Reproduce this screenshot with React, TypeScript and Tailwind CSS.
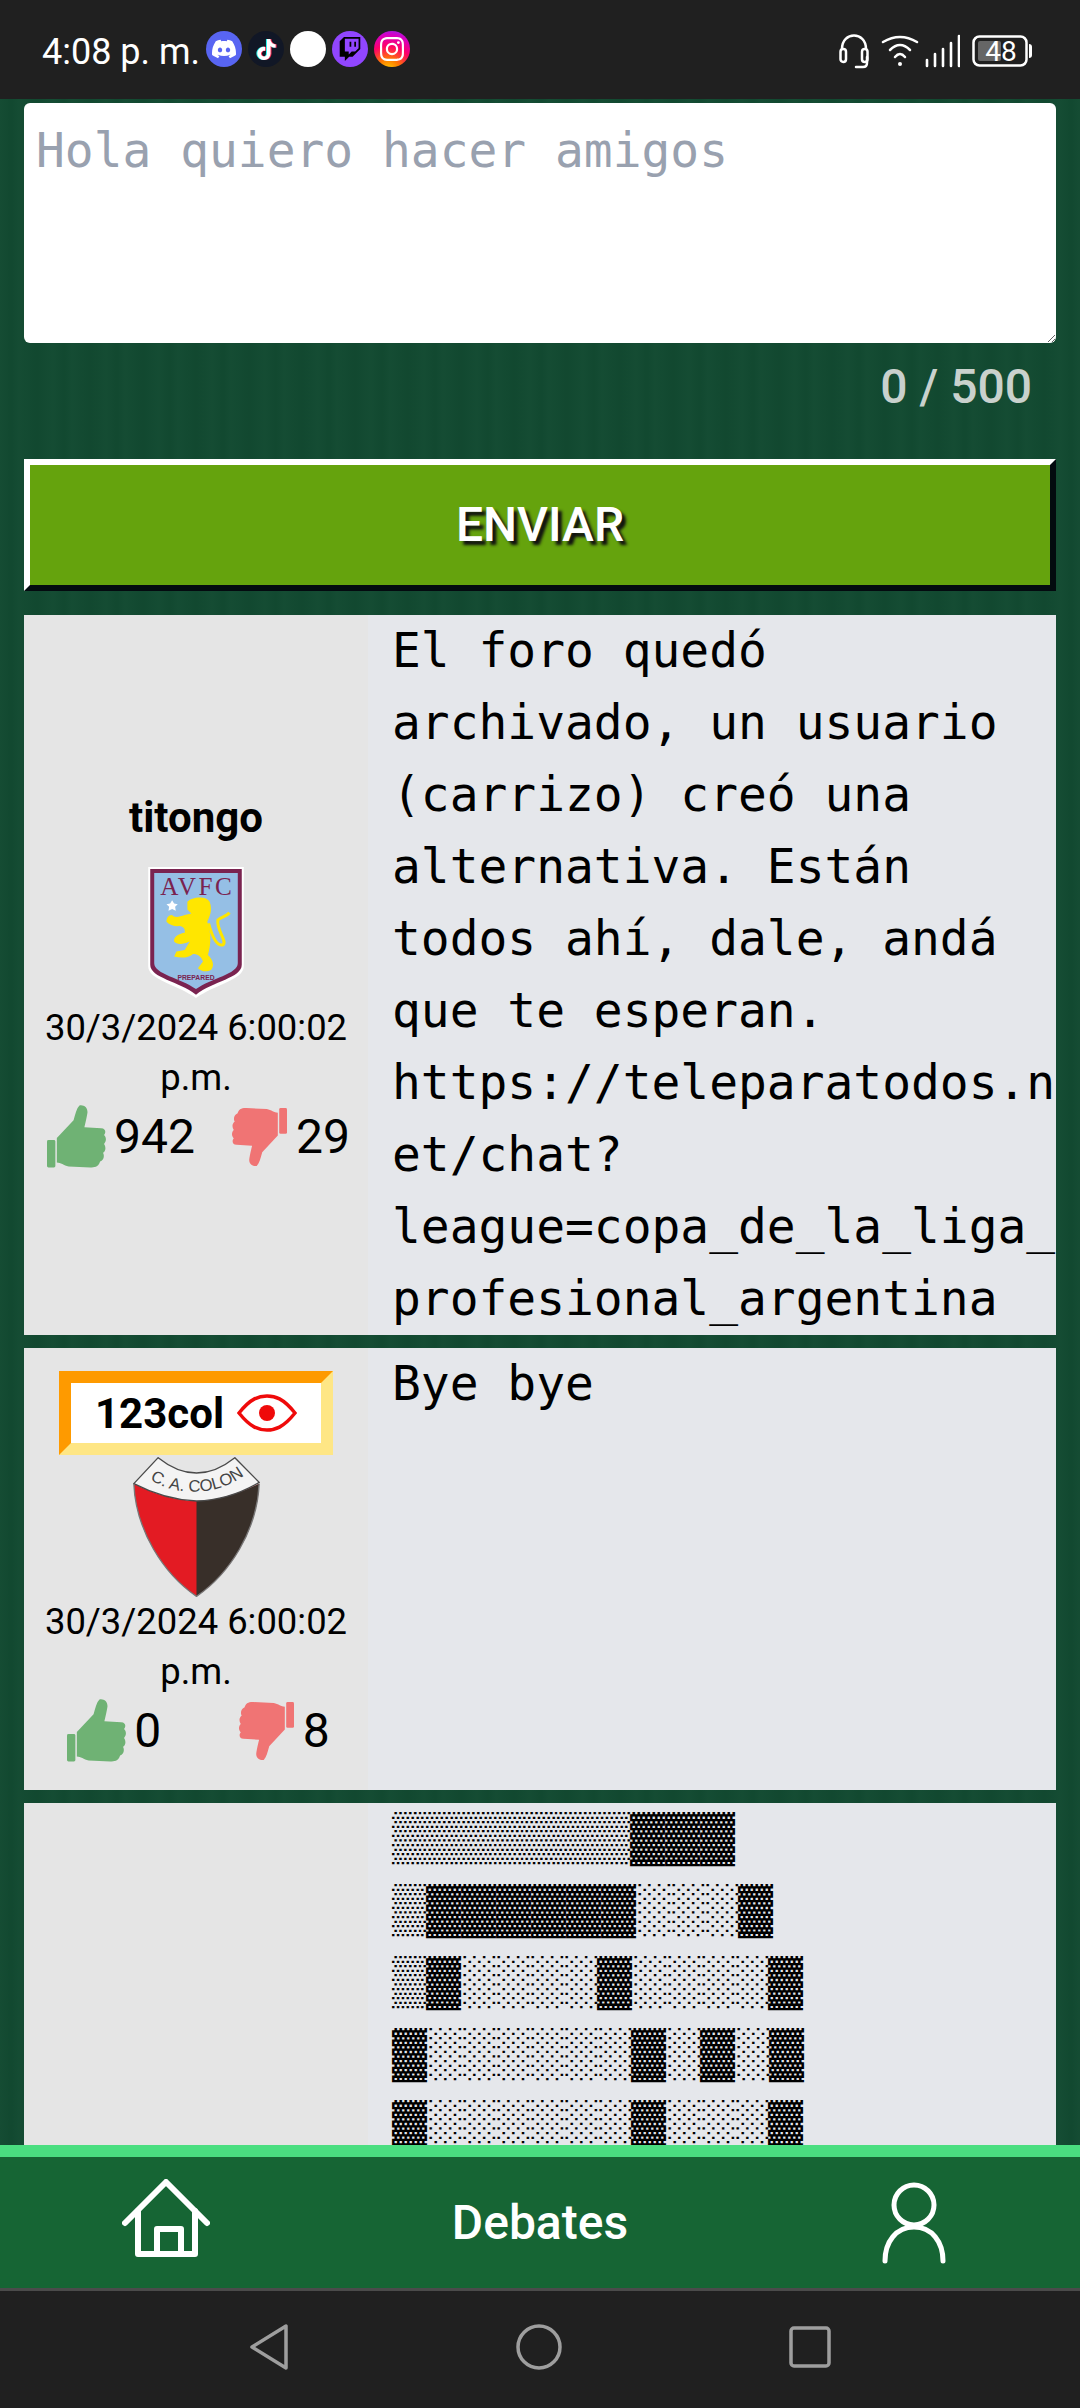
import React from "react";
import { SiDiscord, SiTiktok, SiTwitch, SiInstagram } from "react-icons/si";

const ThumbPath = ({ color }: { color: string }) => (
  <>
    <rect x="0" y="35" width="8.5" height="28" rx="1.5" fill={color} />
    <path
      fill={color}
      d="M10 33 L27 15 C29 8 30 3 33 0 C38 -1 42 3 41 8 C40 14 39 18 38 22 L55 23 C60 23 60 28 58 30 C61 33 60 37 58 39 C60 42 60 46 57 48 C59 52 57 56 54 57 C52 63 48 63 44 63 L22 62 C17 61 14 58 10 58 Z"
    />
  </>
);

const ThumbUp = () => (
  <svg viewBox="0 0 61 63" className="w-[60px] h-[63px] shrink-0">
    <ThumbPath color="#6fb274" />
  </svg>
);

const ThumbDown = () => (
  <svg viewBox="0 0 61 63" className="w-[56px] h-[58px] shrink-0 rotate-180">
    <ThumbPath color="#f07474" />
  </svg>
);

const Votes = ({ up, down }: { up: string; down: string }) => (
  <div className="mt-[2px] flex w-full items-center justify-around font-['Roboto',sans-serif] text-[48px] leading-[63px] text-black">
    <div className="ml-[5px] flex items-center gap-[7px]">
      <ThumbUp />
      <span>{up}</span>
    </div>
    <div className="flex items-center gap-[9px]">
      <ThumbDown />
      <span>{down}</span>
    </div>
  </div>
);

const DateText = () => (
  <p className="w-[320px] text-center font-['Roboto',sans-serif] text-[36.4px] leading-[50px] text-black">30/3/2024 6:00:02 p.m.</p>
);

const AvfcCrest = () => (
  <svg viewBox="0 0 288 395" className="h-[131px] w-[96px]">
    <path d="M0 0H288V300C288 340 200 355 144 395C88 355 0 340 0 300Z" fill="#ffffff" />
    <path d="M6 6H282V295C282 335 195 345 144 385C93 345 6 335 6 295Z" fill="#7a2350" />
    <path d="M18 18H270V290C270 323 190 335 144 368C98 335 18 323 18 290Z" fill="#95bfe5" />
    <text x="144" y="84" textAnchor="middle" fontFamily="'Liberation Serif',serif" fontSize="76" fill="#7a2350" textLength="216">AVFC</text>
    <path d="M72 100l6 10 11 2-8 8 2 12-11-5-11 5 2-12-8-8 11-2Z" fill="#ffffff" />
    <path
      fill="#ffe600"
      d="M118 105C130 90 175 85 185 105C195 130 185 150 178 165C190 200 190 230 180 265C195 280 200 295 190 310C175 318 160 315 150 305L165 285C160 270 150 262 135 262C120 275 100 275 78 270L85 255L110 250L125 225C105 235 85 235 78 225C75 210 95 200 110 198C112 185 105 180 95 178C80 180 65 175 55 165C55 155 60 145 72 145C80 155 95 150 110 145L130 140L118 128Z"
    />
    <path d="M182 170C190 200 205 240 225 235C240 225 205 190 210 160C220 150 235 150 245 138" fill="none" stroke="#ffe600" strokeWidth="9" />
    <text x="144" y="342" textAnchor="middle" fontFamily="'Liberation Sans',sans-serif" fontWeight="700" fontSize="22" fill="#7a2350" textLength="112" lengthAdjust="spacingAndGlyphs">PREPARED</text>
  </svg>
);

const ColonCrest = () => (
  <svg viewBox="0 0 380 420" className="h-[140px] w-[127px]">
    <path d="M2 80C8 220 90 350 190 418C290 350 372 220 378 80C320 110 250 130 190 132C130 130 60 110 2 80Z" fill="#e31b23" />
    <path d="M190 132C250 130 320 110 378 80C372 220 290 350 190 418Z" fill="#382f29" />
    <path d="M2 80L75 2C110 30 150 48 190 48C230 48 270 30 305 2L378 76C320 110 250 130 190 132C130 130 60 110 2 80Z" fill="#f4f4f4" stroke="#4a4a4a" strokeWidth="4" />
    <path d="M2 80C8 220 90 350 190 418C290 350 372 220 378 80" fill="none" stroke="#777777" strokeWidth="4" />
    <path id="colon-arc" d="M36 58C120 122 260 122 346 44" fill="none" />
    <text fontFamily="'Liberation Sans',sans-serif" fontSize="50" fill="#444444">
      <textPath href="#colon-arc" startOffset="50%" textAnchor="middle">C. A. COLON</textPath>
    </text>
  </svg>
);

const Eye = () => (
  <svg viewBox="0 0 60 38" className="h-[38px] w-[60px]">
    <path d="M2 19C14 4 22 2 30 2C38 2 46 4 58 19C46 34 38 36 30 36C22 36 14 34 2 19Z" fill="none" stroke="#ef0a0a" strokeWidth="3.5" />
    <circle cx="30" cy="19" r="8" fill="#ef0a0a" />
  </svg>
);

const shadeRows = [
  "▒▒▒▒▒▒▒▓▓▓",
  "▒▓▓▓▓▓▓░░░▓",
  "▒▓░░░░▓░░░░▓",
  "▓░░░░░░▓░▓░▓",
  "▓░░░░░░▓░░░▓",
];

export default function App() {
  return (
    <div className="flex h-[2408px] w-[1080px] flex-col overflow-hidden bg-[#202020]">
      {/* status bar */}
      <div className="flex h-[99px] shrink-0 items-center bg-[#202020] pb-[1px] pl-[42px] pr-[48px]">
        <span className="mt-[5px] font-['Roboto',sans-serif] text-[36px] leading-none text-white">4:08 p. m.</span>
        <div className="ml-[6px] flex items-center gap-[6px]">
          <span className="flex h-[36px] w-[36px] items-center justify-center rounded-full bg-[#5865f2]"><SiDiscord className="h-[24px] w-[24px] text-white" /></span>
          <span className="relative flex h-[36px] w-[36px] items-center justify-center rounded-full bg-[#111726]">
            <SiTiktok className="absolute left-[7px] top-[8px] h-[21px] w-[21px] text-[#25f4ee]" />
            <SiTiktok className="absolute left-[9px] top-[8px] h-[21px] w-[21px] text-[#fe2c55]" />
            <SiTiktok className="absolute left-[8px] top-[8px] h-[21px] w-[21px] text-white" />
          </span>
          <span className="h-[36px] w-[36px] rounded-full bg-white" />
          <span className="flex h-[36px] w-[36px] items-center justify-center rounded-full bg-[#9146ff]"><SiTwitch className="h-[24px] w-[24px] text-black" /></span>
          <span className="flex h-[36px] w-[36px] items-center justify-center rounded-full bg-[radial-gradient(circle_at_40%_110%,#ffd600_0%,#ff7a00_25%,#ff0069_55%,#d300c5_80%,#7638fa_100%)]"><SiInstagram className="h-[24px] w-[24px] text-white" /></span>
        </div>
        <div className="ml-auto mt-[3px] flex items-center">
          <svg viewBox="0 0 32 36" className="h-[36px] w-[32px]" fill="none" stroke="#ffffff" strokeWidth="2.5" strokeLinecap="round">
            <path d="M4 16C4 -2 28 -2 28 16" />
            <rect x="2.5" y="16" width="5.5" height="13" rx="2.7" />
            <rect x="24" y="16" width="5.5" height="13" rx="2.7" />
            <path d="M29 24V30Q29 34 25 34H18" />
          </svg>
          <svg viewBox="0 0 40 34" className="ml-[10px] h-[34px] w-[40px]" fill="none" stroke="#ffffff" strokeWidth="2.5" strokeLinecap="round">
            <path d="M3 8Q20 -2 37 8" />
            <path d="M10 16Q20 6 30 16" />
            <path d="M15 23Q20 17 25 23" />
            <circle cx="20" cy="30" r="2" fill="#ffffff" stroke="none" />
          </svg>
          <svg viewBox="0 0 36 34" className="ml-[4px] h-[34px] w-[36px]" stroke="#ffffff" strokeWidth="2.6" strokeLinecap="round">
            <path d="M3 32V26M11 32V20M19 32V15M27 32V9M35 32V2" />
          </svg>
          <svg viewBox="0 0 60 32" className="ml-[12px] h-[32px] w-[60px]">
            <rect x="1.5" y="1.5" width="53" height="29" rx="6" fill="none" stroke="#ffffff" strokeWidth="2.5" />
            <rect x="6" y="6" width="23" height="20" rx="2" fill="#666666" />
            <path d="M57 9C59 9 60 10 60 12V20C60 22 59 23 57 23Z" fill="#ffffff" />
            <text x="29" y="26" textAnchor="middle" fontFamily="'Roboto',sans-serif" fontSize="28" fill="#ffffff">48</text>
          </svg>
        </div>
      </div>

      {/* scrolling page */}
      <main className="min-h-0 flex-1 overflow-hidden bg-[#124a31] bg-[repeating-linear-gradient(90deg,rgba(255,255,255,0.012)_0px,rgba(0,0,0,0.02)_11px,rgba(255,255,255,0.012)_19px,rgba(0,0,0,0.025)_37px,rgba(255,255,255,0.01)_53px)] px-[24px] pt-[4px]">
        <textarea
          readOnly
          placeholder="Hola quiero hacer amigos"
          className="block h-[240px] w-[1032px] rounded-[6px] bg-white px-[12px] py-[12px] font-['DejaVu_Sans_Mono',monospace] text-[47.9px] leading-[72px] text-black outline-none placeholder:text-gray-400"
        />
        <div className="flex h-[116px] items-start justify-end pr-[24px] pt-[8px] font-['Roboto',sans-serif] text-[48px] font-medium leading-[72px] text-[#c9d1cd]">0 / 500</div>
        <button className="block h-[132px] w-[1032px] border-[6px] border-solid border-b-[#030a0f] border-l-white border-r-[#030a0f] border-t-white bg-[#65a30d] text-center font-['Roboto',sans-serif] text-[48px] font-medium text-white [text-shadow:4px_4px_3px_#111]">
          ENVIAR
        </button>

        <section className="mt-[24px] flex w-[1032px]">
          <div className="flex w-[344px] shrink-0 flex-col items-center justify-center bg-neutral-200 pt-[6px]">
            <p className="font-['Roboto',sans-serif] text-[42px] font-bold leading-[60px] text-black">titongo</p>
            <div className="mt-[19px] mb-[5px]"><AvfcCrest /></div>
            <DateText />
            <Votes up="942" down="29" />
          </div>
          <div className="min-w-0 flex-1 bg-gray-200 pl-[24px]">
            <p className="break-words font-['DejaVu_Sans_Mono',monospace] text-[47.9px] leading-[72px] text-black">
              El foro quedó archivado, un usuario (carrizo) creó una alternativa. Están todos ahí, dale, andá que te esperan. https://teleparatodos.net/chat?league=copa_de_la_liga_profesional_argentina
            </p>
          </div>
        </section>

        <section className="mt-[13px] flex w-[1032px]">
          <div className="flex w-[344px] shrink-0 flex-col items-center bg-neutral-200 pb-[28px] pt-[23px]">
            <div className="flex h-[84px] w-[274px] items-center justify-center gap-[13px] border-[12px] border-solid border-b-amber-200 border-l-amber-500 border-r-amber-200 border-t-amber-500 bg-white font-['Roboto',sans-serif] text-[42px] font-bold text-black">
              <span>123col</span>
              <Eye />
            </div>
            <div className="mt-[2px]"><ColonCrest /></div>
            <DateText />
            <Votes up="0" down="8" />
          </div>
          <div className="min-w-0 flex-1 bg-gray-200 pl-[24px]">
            <p className="font-['DejaVu_Sans_Mono',monospace] text-[47.9px] leading-[72px] text-black">Bye bye</p>
          </div>
        </section>

        <section className="mt-[13px] flex w-[1032px]">
          <div className="w-[344px] shrink-0 bg-neutral-200" />
          <div className="min-w-0 flex-1 bg-gray-200 pl-[24px]">
            <div className="-mt-[3px]">
              {shadeRows.map((row, i) => (
                <div key={i} className="whitespace-nowrap font-['Liberation_Sans',sans-serif] text-[48px] leading-[72px] text-black">{row}</div>
              ))}
            </div>
          </div>
        </section>
      </main>

      {/* bottom tab bar */}
      <nav className="flex h-[143px] shrink-0 items-center justify-between border-t-[12px] border-solid border-t-[#4ade80] bg-[#166534] px-[110px]">
        <div className="flex w-[112px] justify-center">
          <svg viewBox="0 0 88 78" className="mb-[10px] h-[78px] w-[88px]" fill="none" stroke="#ffffff" strokeWidth="6" strokeLinecap="round" strokeLinejoin="round">
            <path d="M3 44L44 3L85 44" />
            <path d="M16 32V75H73V32" />
            <path d="M35 75V50H59V75" />
          </svg>
        </div>
        <span className="font-['Roboto',sans-serif] text-[48px] font-medium leading-none text-white">Debates</span>
        <div className="flex w-[112px] justify-center">
          <svg viewBox="0 0 64 82" className="h-[82px] w-[64px]" fill="none" stroke="#ffffff" strokeWidth="5" strokeLinecap="round">
            <circle cx="32" cy="23" r="20" />
            <path d="M3 79C3 60 14 45 32 45C50 45 61 60 61 79" />
          </svg>
        </div>
      </nav>

      {/* android navigation */}
      <div className="flex h-[120px] shrink-0 items-center justify-center gap-[227px] border-t-[3px] border-solid border-t-[#4b4b4b] bg-[#202020] pb-[6px]">
        <svg viewBox="0 0 40 46" className="h-[46px] w-[40px]" fill="none" stroke="#9e9e9e" strokeWidth="3.5" strokeLinejoin="round">
          <path d="M37 2V44L3 23Z" />
        </svg>
        <svg viewBox="0 0 46 46" className="h-[46px] w-[46px]" fill="none" stroke="#9e9e9e" strokeWidth="3.5">
          <circle cx="23" cy="23" r="21" />
        </svg>
        <svg viewBox="0 0 42 42" className="h-[42px] w-[42px]" fill="none" stroke="#9e9e9e" strokeWidth="3.5">
          <rect x="2" y="2" width="38" height="38" rx="3" />
        </svg>
      </div>
    </div>
  );
}
